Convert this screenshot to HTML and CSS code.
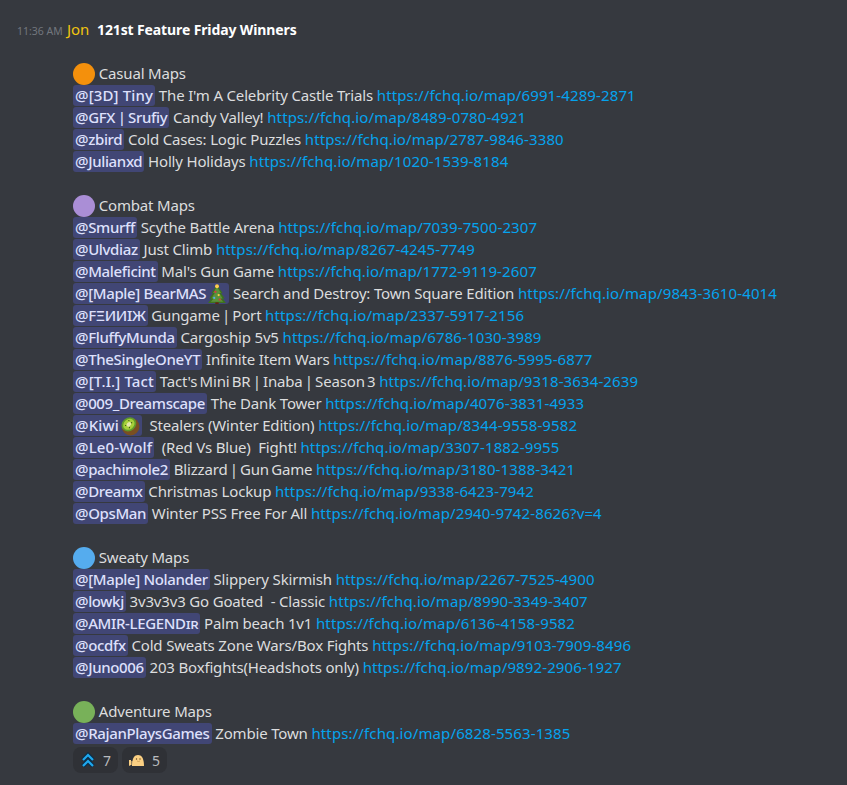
FILE: index.html
```html
<!DOCTYPE html>
<html lang="en">
<head>
<meta charset="utf-8">
<title>121st Feature Friday Winners</title>
<link rel="stylesheet" href="styles.css">
</head>
<body>
<main class="message">
<header class="head"><time class="stamp">11:36 AM</time><span class="author">Jon</span><strong class="title">121st Feature Friday Winners</strong></header>
<div class="body">
<section class="group">
<div class="line"><i class="dot orange"></i> Casual Maps</div>
<div class="line"><span class="at wide">@[3D] Tiny</span> The I'm A Celebrity Castle Trials <a>https://fchq.io/map/6991-4289-2871</a></div>
<div class="line"><span class="at tight-at">@GFX | Srufiy</span> Candy Valley! <a>https://fchq.io/map/8489-0780-4921</a></div>
<div class="line"><span class="at">@zbird</span> Cold Cases: Logic Puzzles <a>https://fchq.io/map/2787-9846-3380</a></div>
<div class="line"><span class="at">@Julianxd</span> Holly Holidays <a>https://fchq.io/map/1020-1539-8184</a></div>
</section>
<section class="group">
<div class="line"><i class="dot purple"></i> Combat Maps</div>
<div class="line"><span class="at">@Smurff</span> Scythe Battle Arena <a>https://fchq.io/map/7039-7500-2307</a></div>
<div class="line"><span class="at">@Ulvdiaz</span> Just Climb <a>https://fchq.io/map/8267-4245-7749</a></div>
<div class="line"><span class="at">@Maleficint</span> Mal's Gun Game <a>https://fchq.io/map/1772-9119-2607</a></div>
<div class="line"><span class="at">@[Maple] BearMAS<svg class="emo" viewBox="0 0 36 36"><path fill="#3E721D" d="M18 2 8 16h3L4 26h4L2 34h32l-6-8h4l-7-10h3z"/><path fill="#5C913B" d="M18 5 11 16h3L8 26h4L7 32h22l-5-6h4l-6-10h3z"/><rect x="15" y="33" width="6" height="3" fill="#662113"/><circle cx="18" cy="4" r="3.500" fill="#FFCC4D"/><circle cx="15" cy="14" r="2" fill="#DD2E44"/><circle cx="21" cy="20" r="2" fill="#FFCC4D"/><circle cx="13" cy="25" r="2" fill="#55ACEE"/><circle cx="23" cy="28" r="2" fill="#DD2E44"/></svg></span> Search and Destroy: Town Square Edition <a>https://fchq.io/map/9843-3610-4014</a></div>
<div class="line"><span class="at">@FΞИИIЖ</span> <span class="tight">Gungame | Port</span> <a>https://fchq.io/map/2337-5917-2156</a></div>
<div class="line"><span class="at">@FluffyMunda</span> Cargoship 5v5 <a>https://fchq.io/map/6786-1030-3989</a></div>
<div class="line"><span class="at">@TheSingleOneYT</span> Infinite Item Wars <a>https://fchq.io/map/8876-5995-6877</a></div>
<div class="line"><span class="at wide">@[T.I.] Tact</span> <span class="tight">Tact's Mini BR | Inaba | Season 3</span> <a>https://fchq.io/map/9318-3634-2639</a></div>
<div class="line"><span class="at">@009_Dreamscape</span> The Dank Tower <a>https://fchq.io/map/4076-3831-4933</a></div>
<div class="line"><span class="at wide">@Kiwi<svg class="emo" viewBox="0 0 36 36"><ellipse cx="19" cy="19" rx="16" ry="16" fill="#7a4f21"/><ellipse cx="16" cy="15" rx="14" ry="12" transform="rotate(-40 16 15)" fill="#5f9a2b"/><ellipse cx="16" cy="15" rx="11" ry="9" transform="rotate(-40 16 15)" fill="#a6cf3a"/><ellipse cx="16" cy="15" rx="4.500" ry="3.500" transform="rotate(-40 16 15)" fill="#e6e7a8"/><circle cx="10" cy="17" r="1" fill="#2b3a14"/><circle cx="21" cy="12" r="1" fill="#2b3a14"/><circle cx="16" cy="8" r="1" fill="#2b3a14"/><circle cx="17" cy="21" r="1" fill="#2b3a14"/></svg></span>  Stealers (Winter Edition) <a>https://fchq.io/map/8344-9558-9582</a></div>
<div class="line"><span class="at wide">@Le0-Wolf</span>  (Red Vs Blue)  Fight! <a>https://fchq.io/map/3307-1882-9955</a></div>
<div class="line"><span class="at">@pachimole2</span> <span class="tight">Blizzard | Gun Game</span> <a>https://fchq.io/map/3180-1388-3421</a></div>
<div class="line"><span class="at">@Dreamx</span> Christmas Lockup <a>https://fchq.io/map/9338-6423-7942</a></div>
<div class="line"><span class="at">@OpsMan</span> Winter PSS Free For All <a>https://fchq.io/map/2940-9742-8626?v=4</a></div>
</section>
<section class="group">
<div class="line"><i class="dot blue"></i> Sweaty Maps</div>
<div class="line"><span class="at">@[Maple] Nolander</span> Slippery Skirmish <a>https://fchq.io/map/2267-7525-4900</a></div>
<div class="line"><span class="at">@lowkj</span> 3v3v3v3 Go Goated  - Classic <a>https://fchq.io/map/8990-3349-3407</a></div>
<div class="line"><span class="at">@AMIR-LEGENDɪʀ</span> Palm beach 1v1 <a>https://fchq.io/map/6136-4158-9582</a></div>
<div class="line"><span class="at">@ocdfx</span> Cold Sweats Zone Wars/Box Fights <a>https://fchq.io/map/9103-7909-8496</a></div>
<div class="line"><span class="at">@Juno006</span> 203 Boxfights(Headshots only) <a>https://fchq.io/map/9892-2906-1927</a></div>
</section>
<section class="group">
<div class="line"><i class="dot green"></i> Adventure Maps</div>
<div class="line"><span class="at">@RajanPlaysGames</span> Zombie Town <a>https://fchq.io/map/6828-5563-1385</a></div>
</section>
</div>
<div class="reactions">
<div class="chip"><svg class="rico" viewBox="0 0 16 16"><path fill="none" stroke="#0b2f4a" stroke-width="4.500" d="M3 8l5-5 5 5M3 14l5-5 5 5"/><path fill="none" stroke="#1fa8ee" stroke-width="2.200" d="M3 8l5-5 5 5M3 14l5-5 5 5"/></svg><span>7</span></div>
<div class="chip"><svg class="rico" viewBox="0 0 16 16"><path fill="#fbd083" d="M3 14C3 7 5 3 9 3s6 4 6 11z"/><path fill="#fbd083" d="M0 8l2 0v5l-2 1zM2.500 9h1v4h-1z"/><circle cx="7.500" cy="7" r=".7" fill="#5a4020"/><circle cx="11" cy="7" r=".7" fill="#5a4020"/><path stroke="#c9964f" stroke-width=".7" fill="none" d="M8 9q1.500 1 3 0"/></svg><span>5</span></div>
</div>
</main>
</body>
</html>
```

FILE: styles.css
```css
html, body { margin: 0; padding: 0; background: #36393f; }
body { width: 847px; height: 785px; overflow: hidden; font-family: "Noto Sans", "Open Sans", sans-serif; font-size: 15px; color: #dcddde; }
.message { padding: 18px 0 0 17px; }
.head { display: flex; align-items: baseline; height: 22px; line-height: 22px; white-space: nowrap; }
.stamp { width: 50px; font-size: 10.500px; color: #72767d; }
.author { width: 30px; font-size: 15px; letter-spacing: -.1px; color: #f1c40f; }
.title { font-size: 14px; font-weight: 700; letter-spacing: -.12px; color: #fff; }
.body { margin: 23px 0 0 56px; display: flex; flex-direction: column; gap: 22px; }
.line { height: 22px; line-height: 20px; white-space: pre; letter-spacing: -.17px; }
.dot { display: inline-block; width: 22px; height: 22px; border-radius: 50%; vertical-align: top; }
.orange { background: #f4900c; }
.purple { background: #aa8ed6; }
.blue { background: #55acee; }
.green { background: #78b159; }
.at { display: inline-block; height: 21px; line-height: 20px; padding: 0 2px; border-radius: 3px; background: #414675; color: #dee0fc; font-weight: 500; letter-spacing: -.35px; vertical-align: top; }
.wide { letter-spacing: .15px; }
.tight { word-spacing: -1.500px; }
.tight-at { word-spacing: -1px; }
a { color: #05a3ee; letter-spacing: .12px; }
.emo { width: 20px; height: 20px; vertical-align: -5px; margin-left: 1px; }
.reactions { display: flex; gap: 4px; margin: 2px 0 0 56px; }
.chip { display: flex; align-items: center; gap: 7px; height: 26px; width: 45px; box-sizing: border-box; padding-left: 7px; background: #2f3136; border-radius: 8px; font-size: 14px; color: #b9bbbe; }
.rico { width: 16px; height: 16px; }
```
